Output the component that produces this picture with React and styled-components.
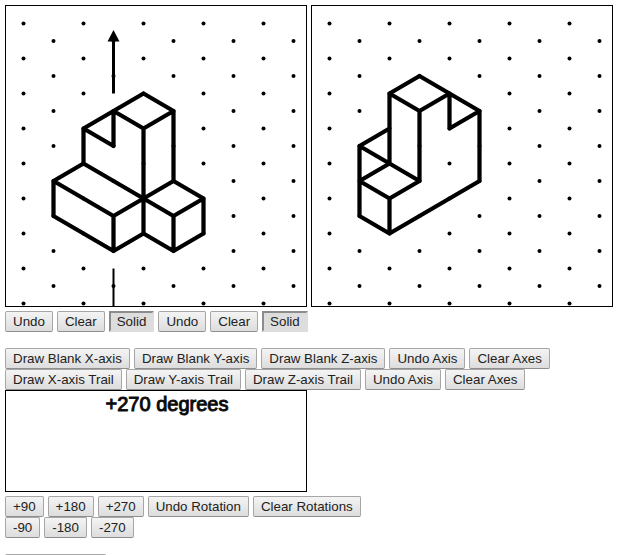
import React from "react";
import styled, { createGlobalStyle, css } from "styled-components";

const GlobalStyle = createGlobalStyle`
  body {
    margin: 0;
    background: #fff;
    color: #000;
    font-family: "Liberation Sans", Arial, sans-serif;
  }
`;

const Page = styled.main`
  box-sizing: border-box;
  height: 100vh;
  overflow: hidden;
  padding: 5px;
`;

const Section = styled.section`
  margin-bottom: ${(p) => p.$gap || 0}px;
`;

const Grids = styled.div`
  display: flex;
  flex-wrap: wrap;
  gap: 4px;
  margin-bottom: 4px;
`;

const GridCanvas = styled.svg`
  display: block;
  border: 1px solid #000;
`;

const ButtonRow = styled.div`
  display: flex;
  flex-wrap: wrap;
  column-gap: 4px;
`;

const Button = styled.button`
  box-sizing: border-box;
  height: 21px;
  padding: 0 7px;
  border: 1px solid #a6a6a6;
  border-bottom-color: #8e8e8e;
  border-radius: 2px;
  background: linear-gradient(#f4f4f4, #dddddd);
  color: #222;
  font-family: inherit;
  line-height: 15px;
  white-space: nowrap;

  &:active,
  &[aria-pressed="true"] {
    border-width: 2px;
    border-style: solid;
    border-color: #8c8c8c #dddddd #dddddd #8c8c8c;
    border-radius: 0;
    background: #dddddd;
    padding: 0 6px;
  }

  ${(p) =>
    p.$wide &&
    css`
      min-width: 101px;
    `}
`;

const RotationLog = styled.div`
  box-sizing: border-box;
  width: 100%;
  max-width: 302px;
  min-height: 102px;
  margin-bottom: 4px;
  padding: 2px 0 2px 22px;
  border: 1px solid #000;
  font-size: 20px;
  line-height: 23px;
  text-align: center;
  -webkit-text-stroke: 1px #111;
`;

const ORIGIN = 17.5;
const STEP_X = 30;
const STEP_Y = 17.5;

const px = (i) => ORIGIN + i * STEP_X;
const py = (j) => ORIGIN + j * STEP_Y;

const DOTS = [];
for (let i = 0; i < 10; i += 1) {
  for (let j = i % 2; j < 17; j += 2) DOTS.push([i, j]);
}

const toPath = (lines) =>
  lines
    .map((line) => "M" + line.map(([i, j]) => `${px(i)} ${py(j)}`).join("L"))
    .join("");

const ORIGINAL_SOLID = [
  [[2, 6], [4, 4], [5, 5], [4, 6], [3, 5], [3, 7], [2, 6], [2, 8]],
  [[4, 6], [4, 12]],
  [[5, 5], [5, 9]],
  [[2, 8], [5, 11], [6, 10], [5, 9], [3, 11], [1, 9], [2, 8]],
  [[1, 9], [1, 11], [3, 13], [4, 12], [5, 13], [6, 12], [6, 10]],
  [[3, 11], [3, 13]],
  [[5, 11], [5, 13]],
];

const ROTATED_SOLID = [
  [[2, 4], [3, 3], [5, 5], [5, 9], [2, 12], [1, 11], [1, 7], [2, 6]],
  [[2, 8], [2, 4], [3, 5], [4, 4], [4, 6], [5, 5]],
  [[3, 5], [3, 9], [1, 7]],
  [[3, 9], [2, 10], [1, 9], [2, 8]],
  [[2, 10], [2, 12]],
];

function IsoGrid({ label, solid, axis }) {
  return (
    <GridCanvas width="300" height="300" viewBox="0 0 300 300" role="img" aria-label={label}>
      {DOTS.map(([i, j]) => (
        <circle key={`${i}-${j}`} cx={px(i)} cy={py(j)} r="2" />
      ))}
      {axis && (
        <g stroke="#000">
          <path d={`M${px(3)} 34V${py(4)}`} strokeWidth="3" />
          <path d={`M${px(3)} ${py(14)}V300`} strokeWidth="2" />
          <path d={`M${px(3)} 24l6 11.5h-12z`} stroke="none" />
        </g>
      )}
      <path
        d={toPath(solid)}
        fill="none"
        stroke="#000"
        strokeWidth="4.25"
        strokeLinecap="round"
        strokeLinejoin="round"
      />
    </GridCanvas>
  );
}

function Controls({ labels }) {
  return (
    <ButtonRow>
      {labels.map((label, i) => (
        <Button
          key={`${label}-${i}`}
          type="button"
          aria-pressed={label === "Solid" ? true : undefined}
        >
          {label}
        </Button>
      ))}
    </ButtonRow>
  );
}

export default function App() {
  return (
    <>
      <GlobalStyle />
      <Page>
        <Section $gap={16}>
          <Grids>
            <IsoGrid label="Original solid" solid={ORIGINAL_SOLID} axis />
            <IsoGrid label="Rotated solid" solid={ROTATED_SOLID} />
          </Grids>
          <Controls labels={["Undo", "Clear", "Solid", "Undo", "Clear", "Solid"]} />
        </Section>
        <Section>
          <Controls
            labels={["Draw Blank X-axis", "Draw Blank Y-axis", "Draw Blank Z-axis", "Undo Axis", "Clear Axes"]}
          />
          <Controls
            labels={["Draw X-axis Trail", "Draw Y-axis Trail", "Draw Z-axis Trail", "Undo Axis", "Clear Axes"]}
          />
        </Section>
        <Section $gap={16}>
          <RotationLog>+270 degrees</RotationLog>
          <Controls labels={["+90", "+180", "+270", "Undo Rotation", "Clear Rotations"]} />
          <Controls labels={["-90", "-180", "-270"]} />
        </Section>
        <Button type="button" $wide />
      </Page>
    </>
  );
}
